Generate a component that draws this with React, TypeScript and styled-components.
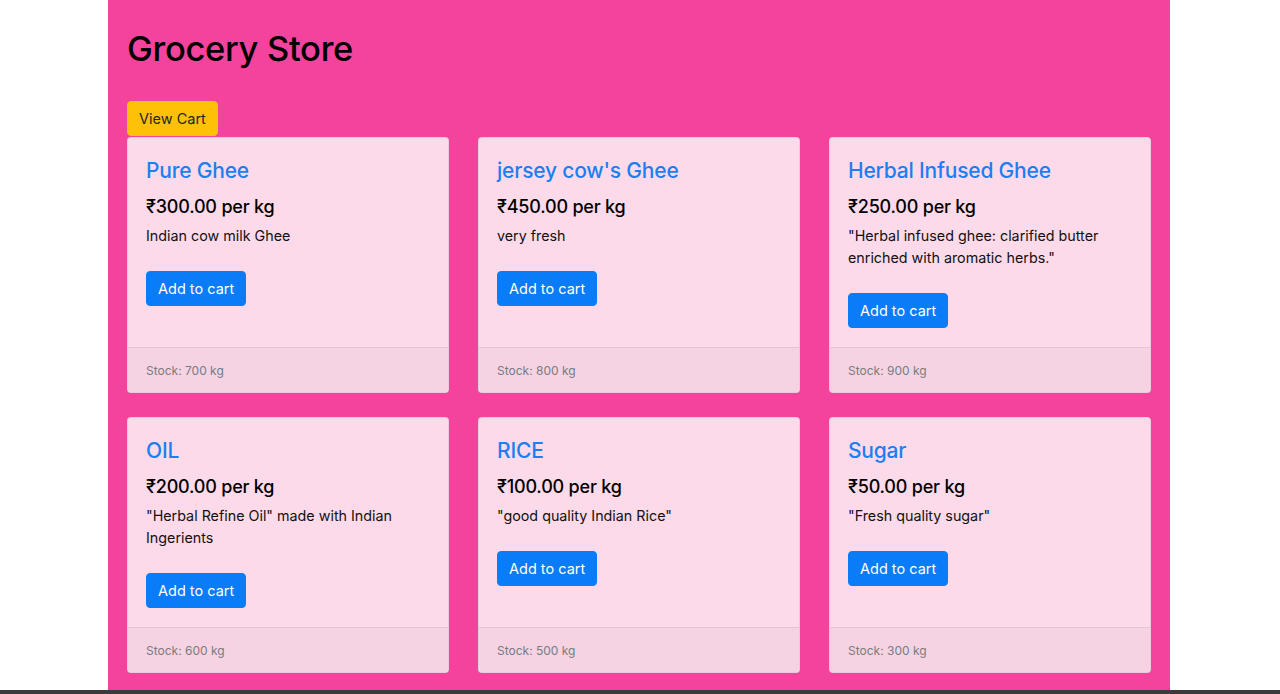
import React from "react";
import styled, { createGlobalStyle } from "styled-components";

const products = [
  { name: "Pure Ghee", price: 300, desc: "Indian cow milk Ghee", stock: 700 },
  { name: "jersey cow's Ghee", price: 450, desc: "very fresh", stock: 800 },
  {
    name: "Herbal Infused Ghee",
    price: 250,
    desc: '"Herbal infused ghee: clarified butter enriched with aromatic herbs."',
    stock: 900,
  },
  { name: "OIL", price: 200, desc: '"Herbal Refine Oil" made with Indian Ingerients', stock: 600 },
  { name: "RICE", price: 100, desc: '"good quality Indian Rice"', stock: 500 },
  { name: "Sugar", price: 50, desc: '"Fresh quality sugar"', stock: 300 },
];

export default function App() {
  return (
    <>
      <GlobalStyle />
      <PageStyled>
        <Title>Grocery Store</Title>
        <CartButton>View Cart</CartButton>
        <GridStyled>
          {products.map((p) => (
            <CardStyled key={p.name}>
              <CardBody>
                <CardTitle>{p.name}</CardTitle>
                <Price>₹{p.price.toFixed(2)} per kg</Price>
                <Desc>{p.desc}</Desc>
                <AddButton>Add to cart</AddButton>
              </CardBody>
              <CardFooter>
                <small>Stock: {p.stock} kg</small>
              </CardFooter>
            </CardStyled>
          ))}
        </GridStyled>
      </PageStyled>
      <BottomEdge />
    </>
  );
}

const GlobalStyle = createGlobalStyle`
  body {
    margin: 0;
    background: #ffffff;
    font-family: Inter, "Liberation Sans", sans-serif;
    color: #212529;
    font-size: 14.9px;
    line-height: 1.5;
  }
`;

const PageStyled = styled.div`
  width: 1062px;
  margin: 0 auto;
  box-sizing: border-box;
  min-height: 100vh;
  padding: 26px 19px 24px;
  background: #f3439c;
  position: relative;
  left: -1px;
`;

const Title = styled.h1`
  margin: 0 0 30px;
  font-size: 34.5px;
  font-weight: 500;
  line-height: 45px;
  color: #000;
  letter-spacing: -0.3px;
`;

const CartButton = styled.button`
  display: block;
  height: 35px;
  padding: 0 11px;
  border: 1px solid #ffc107;
  border-radius: 4px;
  background: #ffc107;
  color: #212529;
  font-family: inherit;
  font-size: 14.5px;
  margin-bottom: 1px;
`;

const GridStyled = styled.div`
  display: grid;
  grid-template-columns: repeat(3, 322px);
  column-gap: 29px;
  row-gap: 24px;
`;

const CardStyled = styled.div`
  display: flex;
  flex-direction: column;
  background: #fddaea;
  border: 1px solid rgba(0, 0, 0, 0.07);
  border-radius: 4px;
  overflow: hidden;
`;

const CardBody = styled.div`
  flex: 1;
  padding: 19px 18px 19px;
`;

const CardTitle = styled.h4`
  margin: 0 0 12px;
  font-size: 21px;
  font-weight: 500;
  line-height: 27px;
  color: #1a7ff2;
  letter-spacing: -0.2px;
`;

const Price = styled.h5`
  margin: 0 0 7px;
  font-size: 18px;
  font-weight: 500;
  line-height: 22px;
  color: #000;
  letter-spacing: -0.2px;
`;

const Desc = styled.p`
  margin: 0 0 24px;
  font-size: 14.3px;
  line-height: 22px;
  color: #111;
`;

const AddButton = styled.button`
  display: block;
  height: 35px;
  padding: 0 11px;
  border: 1px solid #0a7cf7;
  border-radius: 4px;
  background: #0a7cf7;
  color: #fff;
  font-family: inherit;
  font-size: 14.5px;
`;

const CardFooter = styled.div`
  height: 45px;
  box-sizing: border-box;
  padding: 0 18px 0;
  display: flex;
  align-items: center;
  border-top: 1px solid rgba(0, 0, 0, 0.07);
  background: #f6d3e3;
  color: #777b80;

  small {
    font-size: 12px;
    position: relative;
    top: 1px;
  }
`;

const BottomEdge = styled.div`
  position: fixed;
  left: 0;
  right: 0;
  bottom: 0;
  height: 4px;
  background: #3b3b3b;
`;
